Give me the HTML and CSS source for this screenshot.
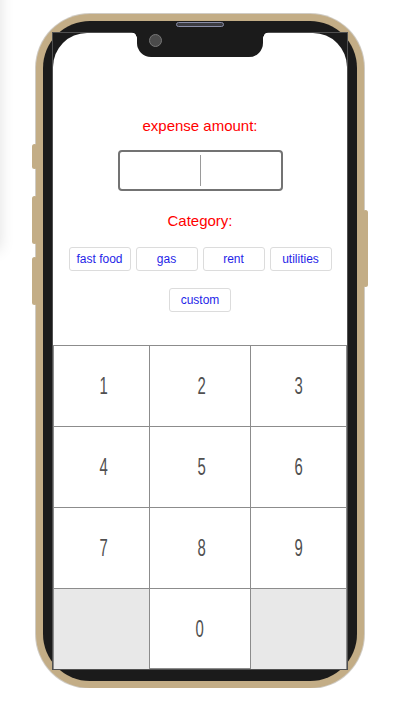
FILE: index.html
```html
<!DOCTYPE html>
<html>
<head>
<meta charset="utf-8">
<link rel="stylesheet" href="styles.css">
</head>
<body>
<div class="side-shadow"></div>
<div class="stage">
  <div class="phone">
    <span class="btn-side b1"></span>
    <span class="btn-side b2"></span>
    <span class="btn-side b3"></span>
    <span class="btn-side b4"></span>
    <div class="bezel">
      <span class="speaker"></span>
      <div class="screen">
        <div class="notch"><span class="camera"></span></div>
        <div class="display">
          <div class="form">
            <div class="label">expense amount:</div>
            <div class="amount"><span class="caret"></span></div>
            <div class="label cat">Category:</div>
            <div class="chips">
              <button class="chip">fast food</button>
              <button class="chip">gas</button>
              <button class="chip">rent</button>
              <button class="chip">utilities</button>
            </div>
            <div class="chips second">
              <button class="chip">custom</button>
            </div>
          </div>
          <div class="keypad">
            <div class="key c1"><span>1</span></div>
            <div class="key c2"><span>2</span></div>
            <div class="key c3"><span>3</span></div>
            <div class="key c1"><span>4</span></div>
            <div class="key c2"><span>5</span></div>
            <div class="key c3"><span>6</span></div>
            <div class="key c1"><span>7</span></div>
            <div class="key c2"><span>8</span></div>
            <div class="key c3"><span>9</span></div>
            <div class="key c1 blank"></div>
            <div class="key c2 zero"><span>0</span></div>
            <div class="key c3 blank"></div>
          </div>
        </div>
      </div>
    </div>
  </div>
</div>
</body>
</html>
```
FILE: styles.css
```css
html, body {
  margin: 0;
  padding: 0;
  background: #ffffff;
  font-family: "Liberation Sans", Arial, sans-serif;
}
.side-shadow {
  position: fixed;
  left: -60px;
  top: -20px;
  width: 60px;
  height: 270px;
  box-shadow: 0 0 14px rgba(0, 0, 0, 0.12);
}
.stage {
  padding: 14px 0 0 36px;
}
.phone {
  position: relative;
  width: 328px;
  height: 674px;
  box-sizing: border-box;
  padding: 7px;
  background: #c3ad86;
  border-radius: 54px;
  box-shadow: 0 0 0 1px rgba(120, 110, 90, 0.35);
}
.btn-side {
  position: absolute;
  width: 5px;
  background: #c3ad86;
  border-radius: 3px;
}
.b1 { left: -4px; top: 130px; height: 25px; }
.b2 { left: -4px; top: 182px; height: 48px; }
.b3 { left: -4px; top: 243px; height: 48px; }
.b4 { right: -4px; top: 196px; height: 77px; }
.bezel {
  position: relative;
  height: 100%;
  box-sizing: border-box;
  padding: 11px 9px;
  background: #1b1b1b;
  border-radius: 47px;
}
.speaker {
  position: absolute;
  left: 133px;
  top: 1px;
  width: 46px;
  height: 3px;
  background: #3c3c42;
  border: 1px solid #8a8ea8;
  border-radius: 3px;
}
.screen {
  position: relative;
  height: 100%;
  box-sizing: border-box;
  border: 1px solid #505050;
  background: #1b1b1b;
  display: flex;
  flex-direction: column;
}
.notch {
  position: absolute;
  top: -1px;
  left: 84px;
  width: 126px;
  height: 25px;
  background: #1b1b1b;
  border-radius: 0 0 14px 14px;
  z-index: 2;
}
.notch::before,
.notch::after {
  content: "";
  position: absolute;
  top: 0;
  width: 6px;
  height: 6px;
}
.notch::before {
  left: -6px;
  background: radial-gradient(circle at 0 100%, transparent 5.5px, #1b1b1b 6px);
}
.notch::after {
  right: -6px;
  background: radial-gradient(circle at 100% 100%, transparent 5.5px, #1b1b1b 6px);
}
.camera {
  position: absolute;
  left: 12px;
  top: 2px;
  width: 11px;
  height: 11px;
  border-radius: 50%;
  background: #4b4b4b;
  border: 1px solid #777;
}
.display {
  flex: 1;
  background: #ffffff;
  border-radius: 34px 34px 0 0;
  display: flex;
  flex-direction: column;
}
.form {
  padding-top: 84px;
  display: flex;
  flex-direction: column;
  align-items: center;
}
.label {
  color: #ff0000;
  font-size: 15px;
  line-height: 18px;
}
.amount {
  margin-top: 15px;
  width: 165px;
  height: 41px;
  box-sizing: border-box;
  border: 2px solid #737373;
  border-radius: 4px;
  display: flex;
  justify-content: center;
  align-items: center;
}
.caret {
  width: 1px;
  height: 31px;
  background: #9a9a9a;
  margin-left: 1px;
}
.cat {
  margin-top: 21px;
}
.chips {
  margin-top: 17px;
  display: flex;
  gap: 5px;
  justify-content: center;
}
.chips.second {
  margin-top: 17px;
}
.chip {
  width: 62px;
  height: 24px;
  box-sizing: border-box;
  padding: 0;
  margin: 0;
  background: #ffffff;
  border: 1px solid #dcdcdc;
  border-radius: 3px;
  color: #1f1fe8;
  font-family: "Liberation Sans", Arial, sans-serif;
  font-size: 12px;
  line-height: 20px;
}
.keypad {
  margin-top: 33px;
  display: grid;
  grid-template-columns: 97px 101px 1fr;
  grid-auto-rows: 81px;
  flex: 1;
}
.key {
  box-sizing: border-box;
  border-top: 1px solid #8c8c8c;
  border-right: 1px solid #8c8c8c;
  display: flex;
  align-items: center;
  justify-content: center;
  font-family: "Liberation Sans", Arial, sans-serif;
  font-size: 24px;
  color: #505050;
  background: #ffffff;
}
.key span {
  display: inline-block;
  transform: scaleX(0.62);
}
.key.c1 {
  border-left: 1px solid #8c8c8c;
  padding-left: 5px;
}
.key.c2 {
  padding-left: 4px;
}
.key.blank {
  background: #e8e8e8;
}
.key.zero {
  border-bottom: 1px solid #8c8c8c;
  padding-left: 0;
}
```
